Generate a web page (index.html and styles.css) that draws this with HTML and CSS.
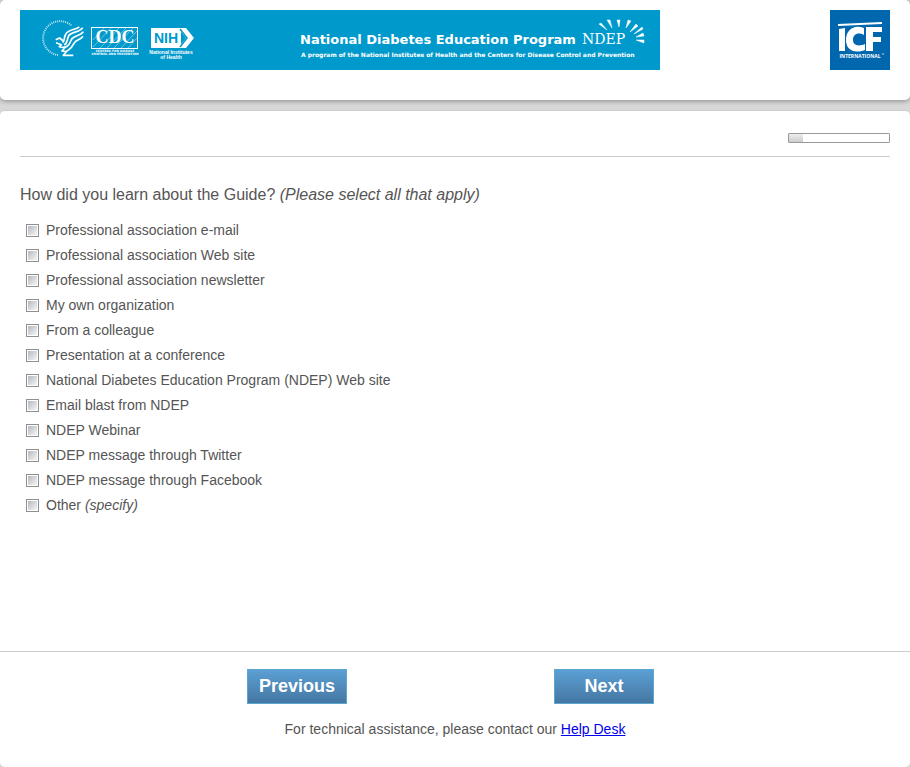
FILE: index.html
```html
<!DOCTYPE html>
<html lang="en">
<head>
    <meta charset="UTF-8">
    <meta name="viewport" content="width=device-width, initial-scale=1.0">
    <title>National Diabetes Education Program Survey</title>
    <link rel="stylesheet" href="styles.css">
</head>
<body>
    <header class="header">
        <svg class="banner" viewBox="0 0 640 60" role="img" aria-label="National Diabetes Education Program">
            <rect width="640" height="60" fill="#0099cc"/>
            <!-- HHS -->
            <path d="M38 45A17 17 0 1 1 52 16" fill="none" stroke="#fff" stroke-width="2" stroke-dasharray="1 1" opacity=".75"/>
            <g transform="translate(0 -5) scale(.3333)" fill="none" stroke="#fff" stroke-width="5" stroke-linejoin="round">
                <path d="M178 66C165 75 146 73 138 86C130 98 136 106 128 113"/>
                <path d="M188 68C178 83 152 80 146 93C140 105 144 113 133 120"/>
                <path d="M190 80C181 94 160 91 154 104C149 116 146 124 132 128"/>
                <path d="M189 94C181 106 168 103 162 115C155 130 146 134 140 139"/>
                <path d="M107 104L119 99L132 110M108 113L124 119L118 125L134 128L126 138L139 140L130 151H160"/>
            </g>
            <!-- CDC -->
            <rect x="71.500" y="17.500" width="46" height="21" fill="none" stroke="#fff"/>
            <path d="M73 30L84 18M73 37L91 18M80 38L99 18M87 38L106 18M94 38L113 18M101 38L117 21M108 38L117 28" stroke="#fff" stroke-width=".6" opacity=".7"/>
            <text class="cdc" x="95" y="33" text-anchor="middle">CDC</text>
            <text class="cdc-small" x="95" y="42" text-anchor="middle">CENTERS FOR DISEASE</text>
            <text class="cdc-small" x="95" y="45" text-anchor="middle">CONTROL AND PREVENTION</text>
            <!-- NIH -->
            <path d="M131 18H161V38H131Z" fill="#fff"/>
            <path d="M158 18H166L174 28L166 38H158L166 28Z" fill="#fff"/>
            <path d="M160 19L167 28L160 37" fill="none" stroke="#0099cc" stroke-width="1.500"/>
            <text class="nih" x="134" y="33">NIH</text>
            <text class="nih-small" x="151" y="44" text-anchor="middle">National Institutes</text>
            <text class="nih-small" x="151" y="49" text-anchor="middle">of Health</text>
            <!-- title -->
            <text class="title" x="280" y="34">National Diabetes Education Program</text>
            <text class="tagline" x="281" y="47">A program of the National Institutes of Health and the Centers for Disease Control and Prevention</text>
            <text class="ndep" x="562" y="34">NDEP</text>
            <path d="M579 14L581 13L587 20ZM587 10L590 10L592 18ZM597 10H600L599 17ZM608 10L611 11L606 18ZM616 14L618 16L610 22ZM622 17L623 19L614 24ZM623 23L624 26L616 27ZM616 30L624 30V33Z" fill="#fff" stroke="#fff" stroke-width=".5"/>
        </svg>
        <svg class="icf" viewBox="0 0 60 60" role="img" aria-label="ICF International">
            <rect width="60" height="60" fill="#0066ad"/>
            <path d="M8 14L52 12V14L8 16Z" fill="#fff"/>
            <path d="M9 19L15 18V41H9Z" fill="#fff"/>
            <path d="M34 25V18C24 14 16 20 16 30C16 40 24 44 35 40V34C28 37 23 35 23 30C23 24 28 22 34 25Z" fill="#fff"/>
            <path d="M36 17H52V22H43V27H51V32H43V41H36Z" fill="#fff"/>
            <text class="icf-small" x="30" y="48" text-anchor="middle">INTERNATIONAL</text>
            <circle cx="53" cy="44" r=".7" fill="#fff"/>
        </svg>
    </header>
    <main class="survey">
        <form class="survey-form">
            <div class="question">
                <div class="progress-row">
                    <div class="progress" role="progressbar" aria-label="Survey progress" aria-valuenow="14" aria-valuemin="0" aria-valuemax="100">
                        <div class="progress-fill" style="width: 14%"></div>
                    </div>
                </div>
                <fieldset class="choices">
                    <legend class="question-text">How did you learn about the Guide? <em>(Please select all that apply)</em></legend>
                    <label class="choice"><input type="checkbox" name="source" value="1">Professional association e-mail</label>
                    <label class="choice"><input type="checkbox" name="source" value="2">Professional association Web site</label>
                    <label class="choice"><input type="checkbox" name="source" value="3">Professional association newsletter</label>
                    <label class="choice"><input type="checkbox" name="source" value="4">My own organization</label>
                    <label class="choice"><input type="checkbox" name="source" value="5">From a colleague</label>
                    <label class="choice"><input type="checkbox" name="source" value="6">Presentation at a conference</label>
                    <label class="choice"><input type="checkbox" name="source" value="7">National Diabetes Education Program (NDEP) Web site</label>
                    <label class="choice"><input type="checkbox" name="source" value="8">Email blast from NDEP</label>
                    <label class="choice"><input type="checkbox" name="source" value="9">NDEP Webinar</label>
                    <label class="choice"><input type="checkbox" name="source" value="10">NDEP message through Twitter</label>
                    <label class="choice"><input type="checkbox" name="source" value="11">NDEP message through Facebook</label>
                    <label class="choice"><input type="checkbox" name="source" value="12"><span>Other <em>(specify)</em></span></label>
                </fieldset>
            </div>
            <div class="buttons">
                <button type="button" class="nav-button">Previous</button>
                <button type="submit" class="nav-button">Next</button>
            </div>
        </form>
        <p class="help">For technical assistance, please contact our <a href="#">Help Desk</a></p>
    </main>
</body>
</html>
```
FILE: styles.css
```css
* {
    margin: 0;
    padding: 0;
    box-sizing: border-box;
}
body {
    display: flex;
    flex-direction: column;
    gap: 10px;
    min-height: 100vh;
    font-family: "Liberation Sans", Arial, sans-serif;
    font-size: 14px;
    color: #555;
    background-color: #d8d8d8;
}
.header {
    display: flex;
    justify-content: space-between;
    align-items: flex-start;
    padding: 10px 20px 30px;
    background-color: #fff;
    border-radius: 5px;
    box-shadow: 0 1px 5px #888;
}
.banner {
    width: 640px;
    height: 60px;
}
.banner text,
.icf text {
    fill: #fff;
}
.icf {
    width: 60px;
    height: 60px;
}
.banner .title {
    font: bold 13px "DejaVu Sans", sans-serif;
}
.banner .tagline {
    font: bold 6px "DejaVu Sans", sans-serif;
}
.banner .ndep {
    font: 14px "DejaVu Serif", serif;
}
.banner .cdc {
    font: bold 18px "Liberation Serif", serif;
}
.banner .cdc-small {
    font: bold 3px "DejaVu Sans", sans-serif;
}
.banner .nih {
    font: bold 14px "Liberation Sans", sans-serif;
    fill: #0099cc;
}
.banner .nih-small {
    font: bold 5px "Liberation Sans", sans-serif;
}
.icf .icf-small {
    font: bold 5px "Open Sans", sans-serif;
}
.survey {
    flex-grow: 1;
    background-color: #fff;
    border-top: 1px solid #ccc;
    border-radius: 5px;
}
.question {
    min-height: 541px;
    padding: 22px 20px;
    border-bottom: 1px solid #ccc;
}
.progress-row {
    display: flex;
    justify-content: flex-end;
    padding-bottom: 13px;
    border-bottom: 1px solid #ccc;
}
.progress {
    width: 102px;
    height: 10px;
    border: 1px solid #999;
    border-radius: 1px;
}
.progress-fill {
    height: 100%;
    background: linear-gradient(#eee, #ccc);
}
.choices {
    padding-top: 13px;
    border: none;
}
.question-text {
    padding-top: 28px;
    font-size: 16px;
    line-height: 20px;
}
.choice {
    display: flex;
    align-items: center;
    gap: 7px;
    height: 25px;
    padding: 0 0 1px 6px;
}
.choice input {
    appearance: none;
    width: 13px;
    height: 13px;
    border: 1px solid #8e8f8f;
    background: linear-gradient(135deg, #b4b9c0, #f6f6f6) content-box #f4f4f4;
    padding: 1px;
}
.choice input:checked {
    background: #4679a8 content-box;
}
.buttons {
    display: flex;
    justify-content: center;
    gap: 207px;
    padding: 17px 9px 0 0;
}
.nav-button {
    width: 100px;
    height: 35px;
    border: 1px solid #5aa7cf;
    background: linear-gradient(#5b9fd4, #4577a2);
    color: #fff;
    font: bold 18px "Liberation Sans", Arial, sans-serif;
    cursor: pointer;
}
.help {
    padding: 17px 20px 30px;
    line-height: 16px;
    text-align: center;
}
.help a {
    color: #0000ee;
}
```
